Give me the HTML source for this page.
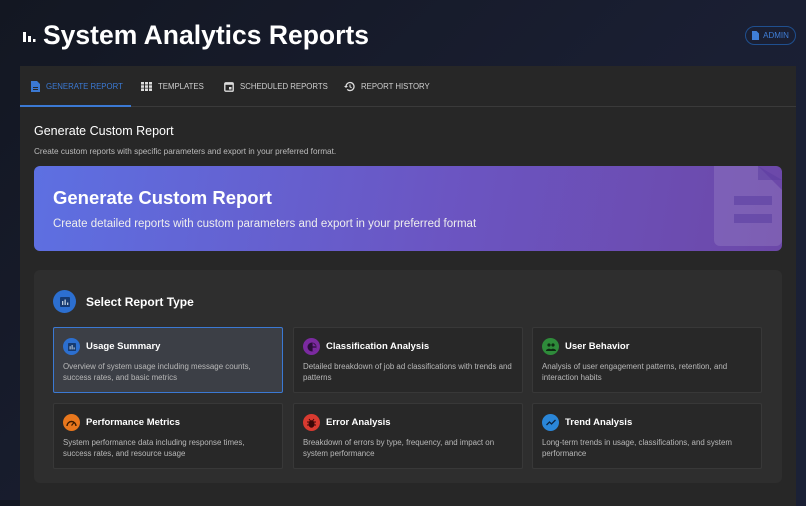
<!DOCTYPE html>
<html><head><style>
*{box-sizing:border-box;margin:0;padding:0}
body{width:806px;height:500px;overflow:hidden;background:linear-gradient(135deg,#131722,#1a1f33 60%,#1b2136);font-family:"Liberation Sans",sans-serif;color:#fff;position:relative}
.title{position:absolute;left:22px;top:20px;font-size:26.5px;font-weight:bold;display:flex;align-items:center;gap:7px}
.admin{position:absolute;left:745px;top:26px;width:51px;height:19px;border:1px solid #1f4f8f;border-radius:10px;color:#3f7ed8;font-size:8px;display:flex;align-items:center;justify-content:center;gap:4px}
.panel{position:absolute;left:20px;top:66px;width:776px;height:440px;background:#272727}
.tabs{height:41px;border-bottom:1px solid #3a3a3a;font-size:7.8px;color:#cfcfcf;position:relative}
.tab{position:absolute;top:0;height:40px;display:flex;align-items:center;gap:6px}
.tab.a{color:#3b79d3}
.ul{position:absolute;left:0;top:39px;width:111px;height:2px;background:#3b79d3}
h2{position:absolute;left:14px;top:58px;font-size:12.5px;font-weight:normal}
.sub{position:absolute;left:14px;top:81px;font-size:8.2px;color:#bcbcbc}
.banner{position:absolute;left:14px;top:100px;width:748px;height:85px;border-radius:6px;background:linear-gradient(100deg,#5d70e2,#6b55c2 55%,#6c48a8);overflow:hidden}
.banner h1{position:absolute;left:19px;top:21px;font-size:18.5px}
.banner p{position:absolute;left:19px;top:52px;font-size:11.5px;color:#eee}
.sel{position:absolute;left:14px;top:204px;width:748px;height:213px;background:#2e2e2e;border-radius:6px}
.sel .hd{position:absolute;left:19px;top:20px;display:flex;align-items:center;gap:10px;font-size:12px;font-weight:bold}
.ci{border-radius:50%;display:flex;align-items:center;justify-content:center}
.card{position:absolute;width:230px;height:66px;background:#282828;border:1px solid #383838;border-radius:2px;padding:8px 9px}
.card.s{background:#3c3f46;border-color:#3b79d3}
.card .t{display:flex;align-items:center;gap:6px;font-size:9.5px;font-weight:bold;margin-top:2px}
.card .d{font-size:7.9px;color:#b8b8b8;line-height:11px;margin-top:6px}
</style></head><body>
<div class="title"><svg width="14" height="14" viewBox="0 0 14 14"><rect x="1" y="3" width="3" height="10" fill="#fff"/><rect x="6" y="7" width="3" height="6" fill="#fff"/><rect x="11" y="10" width="2.5" height="3" fill="#fff"/></svg>System Analytics Reports</div>
<div class="admin"><svg width="7" height="9" viewBox="0 0 7 9"><path d="M0 0h4.5l2.5 2.5V9H0z" fill="#3f7ed8"/></svg>ADMIN</div>
<div class="panel">
<div class="tabs">
<div class="tab a" style="left:11px"><svg width="9" height="11" viewBox="0 0 9 11"><path d="M0 0h6l3 3v8H0z" fill="#3b79d3"/><rect x="2" y="6" width="5" height="1" fill="#272727"/><rect x="2" y="8" width="5" height="1" fill="#272727"/></svg>GENERATE REPORT</div>
<div class="tab" style="left:121px"><svg width="11" height="9" viewBox="0 0 11 9"><g fill="#ddd"><rect x="0" y="0" width="3" height="2.5"/><rect x="4" y="0" width="3" height="2.5"/><rect x="8" y="0" width="3" height="2.5"/><rect x="0" y="3.3" width="3" height="2.5"/><rect x="4" y="3.3" width="3" height="2.5"/><rect x="8" y="3.3" width="3" height="2.5"/><rect x="0" y="6.5" width="3" height="2.5"/><rect x="4" y="6.5" width="3" height="2.5"/><rect x="8" y="6.5" width="3" height="2.5"/></g></svg>TEMPLATES</div>
<div class="tab" style="left:204px"><svg width="10" height="11" viewBox="0 0 10 11"><rect x="0.8" y="1.8" width="8.4" height="8.4" rx="1" fill="none" stroke="#ddd" stroke-width="1.4"/><rect x="0.8" y="1.8" width="8.4" height="2" fill="#ddd"/><rect x="5" y="6" width="2.5" height="2.5" fill="#ddd"/></svg>SCHEDULED REPORTS</div>
<div class="tab" style="left:324px"><svg width="11" height="11" viewBox="0 0 11 11"><path d="M2 5.5a4 4 0 1 1 1.2 2.9" fill="none" stroke="#ddd" stroke-width="1.3"/><path d="M0 5l2 2 2-2z" fill="#ddd"/><path d="M6 3.5v2.3l1.6 1" fill="none" stroke="#ddd" stroke-width="1.1"/></svg>REPORT HISTORY</div>
<div class="ul"></div>
</div>
<h2>Generate Custom Report</h2>
<div class="sub">Create custom reports with specific parameters and export in your preferred format.</div>
<div class="banner"><h1>Generate Custom Report</h1><p>Create detailed reports with custom parameters and export in your preferred format</p>
<svg style="position:absolute;left:680px;top:0" width="68" height="80" viewBox="0 0 68 80"><path d="M0 0h44l24 24v50a6 6 0 0 1-6 6H6a6 6 0 0 1-6-6z" fill="rgba(255,255,255,0.12)"/><path d="M44 0v14h24z" fill="rgba(90,60,160,0.5)"/><rect x="20" y="30" width="38" height="9" fill="rgba(90,60,160,0.55)"/><rect x="20" y="48" width="38" height="9" fill="rgba(90,60,160,0.55)"/></svg></div>
<div class="sel">
<div class="hd"><div class="ci" style="width:23px;height:23px;background:#2c6fd0"><svg width="10" height="10" viewBox="0 0 10 10"><rect width="10" height="10" rx="1" fill="#163a70"/><rect x="2" y="4" width="1.3" height="4" fill="#bcd"/><rect x="4.5" y="2.5" width="1.3" height="5.5" fill="#bcd"/><rect x="7" y="5.5" width="1.3" height="2.5" fill="#bcd"/></svg></div>Select Report Type</div>
</div>
<div class="card s" style="left:33px;top:261px"><div class="t"><div class="ci" style="width:17px;height:17px;background:#2c6fd0"><svg width="8" height="8" viewBox="0 0 10 10"><rect width="10" height="10" rx="1" fill="#163a70"/><rect x="2" y="4" width="1.3" height="4" fill="#bcd"/><rect x="4.5" y="2.5" width="1.3" height="5.5" fill="#bcd"/><rect x="7" y="5.5" width="1.3" height="2.5" fill="#bcd"/></svg></div>Usage Summary</div><div class="d">Overview of system usage including message counts, success rates, and basic metrics</div></div>
<div class="card" style="left:273px;top:261px"><div class="t"><div class="ci" style="width:17px;height:17px;background:#7b2aa0"><svg width="10" height="10" viewBox="0 0 10 10"><circle cx="5" cy="5" r="4.5" fill="#2a0f3a"/><path d="M5.6 0.6v3.8h3.8z M5.6 5.6v3.8A4.4 4.4 0 0 0 9.4 5.6z" fill="#7b2aa0"/></svg></div>Classification Analysis</div><div class="d">Detailed breakdown of job ad classifications with trends and patterns</div></div>
<div class="card" style="left:512px;top:261px"><div class="t"><div class="ci" style="width:17px;height:17px;background:#2e8b3a"><svg width="10" height="8" viewBox="0 0 10 8"><circle cx="3" cy="2" r="1.6" fill="#0e2a12"/><circle cx="7" cy="2" r="1.6" fill="#0e2a12"/><path d="M0 8c0-3 6-3 6 0zM4 8c0-3 6-3 6 0z" fill="#0e2a12"/></svg></div>User Behavior</div><div class="d">Analysis of user engagement patterns, retention, and interaction habits</div></div>
<div class="card" style="left:33px;top:337px"><div class="t"><div class="ci" style="width:17px;height:17px;background:#e8771d"><svg width="11" height="9" viewBox="0 0 11 9"><path d="M1 8a4.5 4.5 0 1 1 9 0" fill="none" stroke="#3a1a00" stroke-width="1.4"/><path d="M5.5 7.5l2.5-3" stroke="#3a1a00" stroke-width="1.2"/></svg></div>Performance Metrics</div><div class="d">System performance data including response times, success rates, and resource usage</div></div>
<div class="card" style="left:273px;top:337px"><div class="t"><div class="ci" style="width:17px;height:17px;background:#d83a30"><svg width="9" height="10" viewBox="0 0 9 10"><ellipse cx="4.5" cy="6" rx="3" ry="3.8" fill="#3a0808"/><path d="M0 4h9M0 7h9M2 1l1.5 2M7 1L5.5 3" stroke="#3a0808" stroke-width="1"/></svg></div>Error Analysis</div><div class="d">Breakdown of errors by type, frequency, and impact on system performance</div></div>
<div class="card" style="left:512px;top:337px"><div class="t"><div class="ci" style="width:17px;height:17px;background:#2a86d8"><svg width="10" height="7" viewBox="0 0 10 7"><path d="M0.5 6l3-3 2 2L9.5 1" fill="none" stroke="#0b2340" stroke-width="1.3"/></svg></div>Trend Analysis</div><div class="d">Long-term trends in usage, classifications, and system performance</div></div>
</div>
</body></html>
